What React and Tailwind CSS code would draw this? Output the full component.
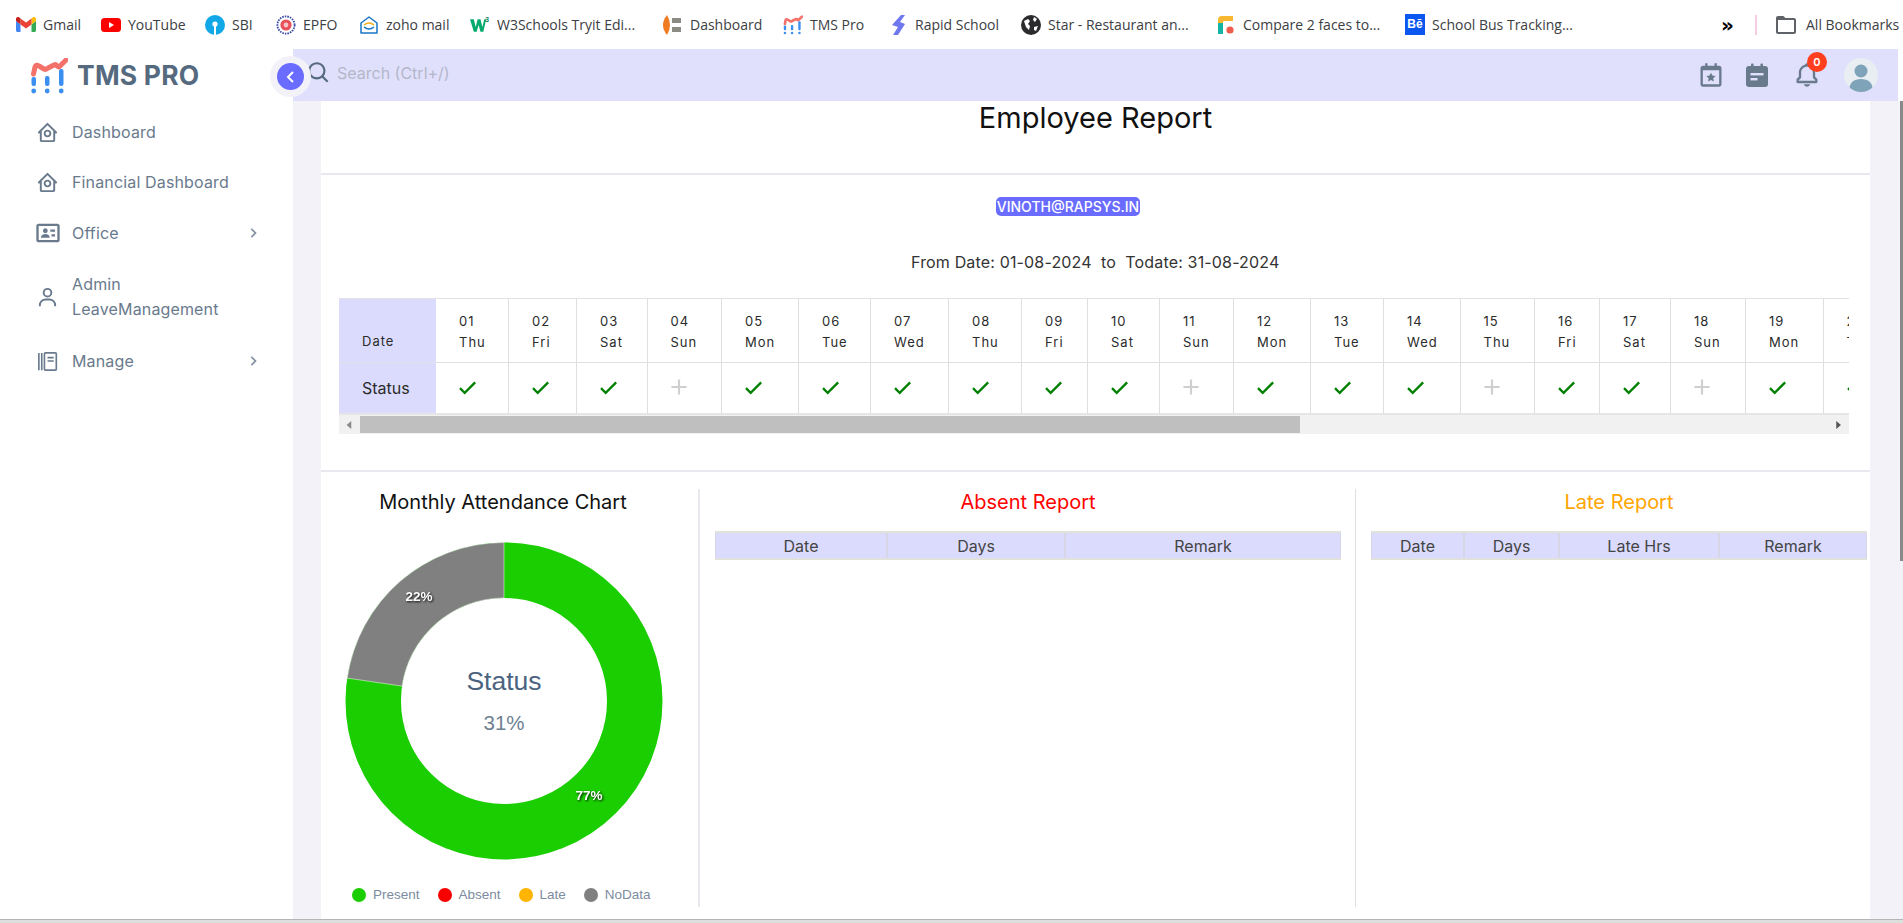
import React from "react";
import {
  BiHomeCircle,
  BiIdCard,
  BiUser,
  BiChevronRight,
  BiChevronLeft,
  BiSearch,
  BiCalendarStar,
  BiBell,
  BiCaretLeft,
  BiCaretRight,
  BiCheck,
  BiPlus,
  BiFolder,
} from "react-icons/bi";

const TmsLogo = ({ className }) => (
  <svg viewBox="0 0 38 36" className={className}>
    <path d="M3.5 16 L5 9 Q6 6 9 8 L14 11 Q16 12 18 10 L24 7 Q26 6 27 8 L29 9 L36 2" fill="none" stroke="#f4716a" strokeWidth="5" strokeLinecap="round" strokeLinejoin="round" />
    <g fill="#3b8ff0">
      <rect x="1.5" y="19" width="4.5" height="9" rx="2" />
      <circle cx="3.7" cy="33" r="2.4" />
      <rect x="15" y="18" width="4.5" height="10" rx="2" />
      <circle cx="17.2" cy="33" r="2.4" />
      <rect x="29" y="11" width="4.5" height="17" rx="2" />
      <circle cx="31.2" cy="33" r="2.4" />
    </g>
  </svg>
);

const ManageIcon = ({ className }) => (
  <svg viewBox="0 0 24 24" className={className} fill="none" stroke="currentColor" strokeWidth="1.7">
    <path d="M3 3v18M6 3v18" />
    <rect x="8.8" y="3" width="12.4" height="18" rx="1" />
    <path d="M12 8h6.5M12 11.5h6.5" />
  </svg>
);

const NoteCalendarIcon = ({ className }) => (
  <svg viewBox="0 0 28 28" className={className}>
    <path d="M6 5h16q3 0 3 3v15q0 3-3 3H6q-3 0-3-3V8q0-3 3-3z" fill="currentColor" />
    <rect x="8" y="2.5" width="2.6" height="5" rx="1" fill="currentColor" />
    <rect x="17.4" y="2.5" width="2.6" height="5" rx="1" fill="currentColor" />
    <rect x="7.5" y="12" width="13" height="2.4" fill="#e0e0fd" />
    <rect x="7.5" y="17" width="7" height="2.4" fill="#e0e0fd" />
  </svg>
);

const GmailIcon = () => (
  <svg viewBox="0 0 20 15" className="w-5 h-[15px]">
    <path d="M1.4 15H4.5V7.4L0 4v9.6C0 14.4.6 15 1.4 15z" fill="#4285f4" />
    <path d="M15.5 15h3.1c.8 0 1.4-.6 1.4-1.4V4l-4.5 3.4z" fill="#34a853" />
    <path d="M15.5 1.5v5.9L20 4V2c0-1.7-2-2.7-3.4-1.6z" fill="#fbbc04" />
    <path d="M4.5 7.4V1.5L10 5.6l5.5-4.1v5.9L10 11.5z" fill="#ea4335" />
    <path d="M0 2v2l4.5 3.4V1.5L3.4.4C2 -.7 0 .3 0 2z" fill="#c5221f" />
  </svg>
);

const YoutubeIcon = () => (
  <svg viewBox="0 0 20 14" className="w-5 h-[14px]">
    <rect width="20" height="14" rx="3.5" fill="#ff0000" />
    <path d="M8 4l5 3-5 3z" fill="#fff" />
  </svg>
);

const SbiIcon = () => (
  <svg viewBox="0 0 20 20" className="w-5 h-5">
    <circle cx="10" cy="10" r="10" fill="#12a8e8" />
    <circle cx="10" cy="9" r="2.6" fill="#fff" />
    <rect x="9" y="10" width="2" height="10" fill="#fff" />
  </svg>
);

const EpfoIcon = () => (
  <svg viewBox="0 0 20 20" className="w-5 h-5">
    <circle cx="10" cy="10" r="8.6" fill="none" stroke="#3b4ba8" strokeWidth="1.8" strokeDasharray="1.6 1" />
    <circle cx="10" cy="10" r="5.6" fill="#e8505b" />
    <circle cx="10" cy="10" r="2.4" fill="#f7c6c8" />
  </svg>
);

const ZohoIcon = () => (
  <svg viewBox="0 0 20 20" className="w-5 h-5" fill="none">
    <path d="M2 8l8-6 8 6v10H2z" stroke="#1976c5" strokeWidth="1.5" strokeLinejoin="round" />
    <path d="M5 10q5-4 10 0" stroke="#f2b01e" strokeWidth="1.6" />
    <path d="M15 12q-5 4-10 0" stroke="#1976c5" strokeWidth="1.4" />
  </svg>
);

const W3Icon = () => (
  <svg viewBox="0 0 21 18" className="w-[21px] h-[18px]">
    <path d="M0 3h4l2 8 2-8h3l2 8 2-8h2l-3 13h-3L9 9l-2 7H4z" fill="#04aa6d" />
    <text x="16" y="6" fontSize="7" fontWeight="700" fill="#04805a" className="font-['Liberation_Sans',sans-serif]">3</text>
  </svg>
);

const RajIcon = () => (
  <svg viewBox="0 0 20 22" className="w-5 h-[22px]">
    <path d="M4 1q3 5 3 10t-3 10q-4-5-4-10t4-10z" fill="#f07c22" />
    <rect x="9" y="4" width="9" height="5" fill="#8b8b83" />
    <rect x="9" y="13" width="9" height="5" fill="#8b8b83" />
  </svg>
);

const RapidIcon = () => (
  <svg viewBox="0 0 18 22" className="w-[18px] h-[22px]">
    <path d="M12 1h4l-5 7 5 2-7 11H4l5-8-6-2z" fill="#6f78ee" />
  </svg>
);

const GlobeIcon = () => (
  <svg viewBox="0 0 20 20" className="w-5 h-5">
    <circle cx="10" cy="10" r="10" fill="#2b2b2e" />
    <path d="M3 6l4-2 2 2-2 3 2 2-1 4-3-3zM13 2l3 2-2 3-2-2zM13 12l4-1-2 5-2-1z" fill="#fff" />
  </svg>
);

const CompareIcon = () => (
  <svg viewBox="0 0 18 20" className="w-[18px] h-5">
    <path d="M1 5q0-4 4-4h11v5H7q-1 0-1 1v12H1z" fill="#f7b731" />
    <path d="M1 8h5v11H1z" fill="#12b5a5" />
    <circle cx="13" cy="15" r="3.6" fill="#ef5b4c" />
  </svg>
);

const BehanceIcon = () => (
  <div className="w-[21px] h-[21px] bg-[#0b57f0] text-white text-[12px] font-bold leading-[21px] text-center font-['Liberation_Sans',sans-serif]">Bē</div>
);

const bookmarks = [
  { label: "Gmail", icon: <GmailIcon />, box: "w-[85px]" },
  { label: "YouTube", icon: <YoutubeIcon />, box: "w-[104px]" },
  { label: "SBI", icon: <SbiIcon />, box: "w-[71px]" },
  { label: "EPFO", icon: <EpfoIcon />, box: "w-[83px]" },
  { label: "zoho mail", icon: <ZohoIcon />, box: "w-[111px]" },
  { label: "W3Schools Tryit Edi...", icon: <W3Icon />, box: "w-[193px]" },
  { label: "Dashboard", icon: <RajIcon />, box: "w-[120px]" },
  { label: "TMS Pro", icon: <TmsLogo className="w-5 h-5" />, box: "w-[105px]" },
  { label: "Rapid School", icon: <RapidIcon />, box: "w-[133px]" },
  { label: "Star - Restaurant an...", icon: <GlobeIcon />, box: "w-[195px]" },
  { label: "Compare 2 faces to...", icon: <CompareIcon />, box: "w-[189px]" },
  { label: "School Bus Tracking...", icon: <BehanceIcon />, box: "w-[170px]" },
];

const menu = [
  { label: "Dashboard", icon: BiHomeCircle, h: "h-[50px]" },
  { label: "Financial Dashboard", icon: BiHomeCircle, h: "h-[50px]" },
  { label: "Office", icon: BiIdCard, h: "h-[52px]", arrow: true, big: true },
  { label: "Admin LeaveManagement", icon: BiUser, h: "h-[76px]" },
  { label: "Manage", icon: ManageIcon, h: "h-[52px]", arrow: true, box: true },
];

const days = [
  ["01", "Thu", 1], ["02", "Fri", 1], ["03", "Sat", 1], ["04", "Sun", 0], ["05", "Mon", 1],
  ["06", "Tue", 1], ["07", "Wed", 1], ["08", "Thu", 1], ["09", "Fri", 1], ["10", "Sat", 1],
  ["11", "Sun", 0], ["12", "Mon", 1], ["13", "Tue", 1], ["14", "Wed", 1], ["15", "Thu", 0],
  ["16", "Fri", 1], ["17", "Sat", 1], ["18", "Sun", 0], ["19", "Mon", 1], ["20", "Tue", 1],
];

const legend = [
  { label: "Present", dot: "bg-[#1bce02]" },
  { label: "Absent", dot: "bg-[#f80000]" },
  { label: "Late", dot: "bg-[#ffb400]" },
  { label: "NoData", dot: "bg-[#808080]" },
];

function Bookmarks() {
  return (
    <div className="h-[49px] bg-white flex items-center pl-4 text-[14px] text-[#3c4043] font-['Open_Sans',sans-serif]">
      {bookmarks.map((b) => (
        <div key={b.label} className={`${b.box} flex items-center gap-[7px] shrink-0 whitespace-nowrap`}>
          <span className="flex items-center justify-center w-5 shrink-0">{b.icon}</span>
          <span>{b.label}</span>
        </div>
      ))}
      <span className="ml-[146px] w-[34px] text-[20px] leading-none text-black font-bold font-['DejaVu_Sans',sans-serif]">»</span>
      <div className="w-[2px] h-5 bg-[#f6d0e0]" />
      <BiFolder className="ml-[17px] text-[24px] text-[#5f6368]" />
      <span className="ml-2 whitespace-nowrap">All Bookmarks</span>
    </div>
  );
}

function Sidebar() {
  return (
    <aside className="w-[293px] shrink-0 bg-white relative">
      <div className="flex items-center h-[52px] pl-[30px] pt-[2px] gap-[9px]">
        <TmsLogo className="w-[38px] h-[36px]" />
        <span className="text-[26.5px] font-bold text-[#566a7f] tracking-[0.2px]">TMS PRO</span>
      </div>
      <div className="absolute top-[7px] left-[270px] w-[41px] h-[41px] rounded-full bg-[#f2f2f8] flex items-center justify-center z-10">
        <div className="w-[27px] h-[27px] rounded-full bg-[#696cff] flex items-center justify-center text-white">
          <BiChevronLeft className="text-[24px]" />
        </div>
      </div>
      <nav className="pt-[6px] pl-[36px] text-[#697a8d]">
        {menu.map((m) => {
          const Icon = m.icon;
          return (
            <div key={m.label} className={`${m.h} flex items-center`}>
              <span className="w-[36px] shrink-0">
                {m.box ? (
                  <Icon className="w-[23px] h-[23px]" />
                ) : (
                  <Icon className={m.big ? "text-[28px] -ml-[2px]" : "text-[23px]"} />
                )}
              </span>
              <span className="w-[171px] text-[16px] leading-[25px] tracking-[0.15px]">{m.label}</span>
              {m.arrow && <BiChevronRight className="text-[20px] text-[#8592a3]" />}
            </div>
          );
        })}
      </nav>
    </aside>
  );
}

function Header() {
  return (
    <div className="h-[52px] bg-[#e0e0fd] flex items-center pl-[13px] pr-[20px] text-[#697a8d]">
      <BiSearch className="mb-[5px] text-[26px] text-[#566a7f]" />
      <span className="ml-[5px] mb-[5px] text-[16px] text-[#b4b7c9]">Search (Ctrl+/)</span>
      <BiCalendarStar className="ml-auto text-[28px]" />
      <NoteCalendarIcon className="ml-[18px] w-[28px] h-[28px]" />
      <div className="relative ml-[22px]">
        <BiBell className="text-[28px]" />
        <span className="absolute -top-[9px] left-[14px] w-[20px] h-[20px] rounded-full bg-[#ff3e1d] text-white text-[11px] font-semibold flex items-center justify-center">0</span>
      </div>
      <div className="ml-[23px] w-[34px] h-[34px] rounded-full bg-[#e8eef2] overflow-hidden">
        <svg viewBox="0 0 34 34" className="w-full h-full">
          <circle cx="17" cy="13" r="6.5" fill="#7fa3b8" />
          <path d="M5 34c0-10 5-13 12-13s12 3 12 13z" fill="#7fa3b8" />
        </svg>
      </div>
    </div>
  );
}

function AttendanceStrip() {
  return (
    <div className="ml-[18px] w-[1510px] overflow-hidden">
      <div className="grid grid-cols-[97px_73px_68px_70.5px_74.5px_77px_72px_78px_73px_66px_72px_74px_77px_73px_76.5px_74.5px_65px_71px_75px_77.5px_77px] grid-rows-[64px_50px] w-max border-t border-[#e2e2e6] text-[13px] text-[#2b2b2b] tracking-[1px]">
        <div className="bg-[#dbdbfd] border-b border-[#e2e2e6] pl-[23px] flex items-end pb-[10px] leading-[21px]">Date</div>
        {days.map(([d, w]) => (
          <div key={d} className="border-r border-b border-[#dfdfe2] pl-[23px] pt-[12px] leading-[21px]">
            <div>{d}</div>
            <div>{w}</div>
          </div>
        ))}
        <div className="bg-[#dbdbfd] pl-[23px] flex items-center text-[16px] tracking-normal">Status</div>
        {days.map(([d, , ok]) => (
          <div key={d} className="border-r border-[#dfdfe2] pl-[17px] flex items-center">
            {ok ? <BiCheck className="mb-[2px] text-[28px] text-[#008000]" /> : <BiPlus className="ml-[1px] mb-[2px] text-[26px] text-[#cfcfcf]" />}
          </div>
        ))}
      </div>
      <div className="h-[21px] bg-[#f1f1f1] border-t-2 border-[#e6e6e6] flex items-center text-[#555]">
        <BiCaretLeft className="w-[21px] text-[14px] text-[#8a8a8a]" />
        <div className="w-[940px] h-[17px] bg-[#bfbfbf]" />
        <BiCaretRight className="ml-auto mr-[4px] text-[14px]" />
      </div>
    </div>
  );
}

function Donut() {
  return (
    <svg viewBox="0 0 320 320" className="mt-[26px] ml-[23px] w-[320px] h-[320px]">
      <circle cx="160" cy="160" r="130.75" fill="none" stroke="#1bce02" strokeWidth="55.5" />
      <path d="M160 1.5A158.5 158.5 0 0 0 3.2 137.1L58.1 145.1A103 103 0 0 1 160 57Z" fill="#808080" stroke="#fff" strokeWidth="0.5" />
      <g className="font-['Liberation_Sans',sans-serif]" textAnchor="middle">
        <text x="160" y="149" fontSize="26.5" fill="#4c6380">Status</text>
        <text x="160" y="189" fontSize="20.5" fill="#6e8192">31%</text>
        <g fontSize="13.5" fontWeight="700" fill="#fff" className="[filter:drop-shadow(1px_1px_1px_rgba(0,0,0,0.9))]">
          <text x="75" y="60">22%</text>
          <text x="245" y="259">77%</text>
        </g>
      </g>
    </svg>
  );
}

function EmptyTable({ cols, heads }) {
  return (
    <div className={`mt-[16px] grid ${cols} h-[29px] bg-[#dbdbfd] border-y-2 border-[#e2e2dd] text-[16px] text-[#444]`}>
      {heads.map((h) => (
        <div key={h} className="border-x border-[#d6d6e6] flex items-center justify-center">{h}</div>
      ))}
    </div>
  );
}

export default function App() {
  return (
    <div className="h-[923px] overflow-hidden flex flex-col bg-white font-['Inter',sans-serif]">
      <Bookmarks />
      <div className="flex-1 flex min-h-0">
        <Sidebar />
        <div className="w-[1605px] flex flex-col bg-[#f2f2f8]">
          <Header />
          <div className="flex-1 ml-[28px] mr-[28px] bg-white">
            <div className="h-[74px] border-b-2 border-[#e8e9ef] text-center text-[29px] leading-[34px] text-[#111] whitespace-nowrap">Employee Report</div>
            <div className="h-[297px] border-b-2 border-[#e8e9ef]">
              <div className="pl-[675px] pt-[22px]">
                <div className="w-[144px] h-[19px] rounded-[5px] bg-[#696cff] text-white text-[14px] leading-[19px] font-medium text-center">VINOTH@RAPSYS.IN</div>
              </div>
              <div className="mt-[35px] pl-[590px] text-[16px] leading-[22px] text-[#333] tracking-[0.16px] whitespace-pre">From Date: 01-08-2024  to  Todate: 31-08-2024</div>
              <div className="mt-[25px]">
                <AttendanceStrip />
              </div>
            </div>
            <div className="flex h-[418px] mt-[17px]">
              <div className="w-[379px] pr-[13px] border-r-2 border-[#e8e9ef]">
                <div className="text-center text-[20px] leading-[26px] text-[#111]">Monthly Attendance Chart</div>
                <Donut />
                <div className="mt-[24px] pl-[31px] flex items-center gap-[18px] h-5 text-[13.5px] text-[#7b8ca0] font-['Liberation_Sans',sans-serif]">
                  {legend.map((l) => (
                    <div key={l.label} className="flex items-center gap-[7px]">
                      <span className={`${l.dot} w-[14px] h-[14px] rounded-full`} />
                      <span>{l.label}</span>
                    </div>
                  ))}
                </div>
              </div>
              <div className="w-[656px] pl-[15px] pr-[14px] border-r border-[#e0e0e0]">
                <div className="text-center text-[20px] leading-[26px] text-[#ff0000]">Absent Report</div>
                <EmptyTable cols="grid-cols-[172px_178px_276px]" heads={["Date", "Days", "Remark"]} />
              </div>
              <div className="w-[514px] pl-[15px] pr-[3px]">
                <div className="text-center text-[20px] leading-[26px] text-[#ffa500]">Late Report</div>
                <EmptyTable cols="grid-cols-[93px_95px_160px_148px]" heads={["Date", "Days", "Late Hrs", "Remark"]} />
              </div>
            </div>
          </div>
        </div>
        <div className="w-[5px] bg-[#f2f2f8] flex flex-col">
          <div className="h-[52px] bg-white" />
          <div className="ml-[2px] w-[3px] h-[460px] bg-[#8a8a8a]" />
        </div>
      </div>
      <div className="h-[4px] border-t border-[#b5b5b5] bg-[#dcdfdc]" />
    </div>
  );
}
